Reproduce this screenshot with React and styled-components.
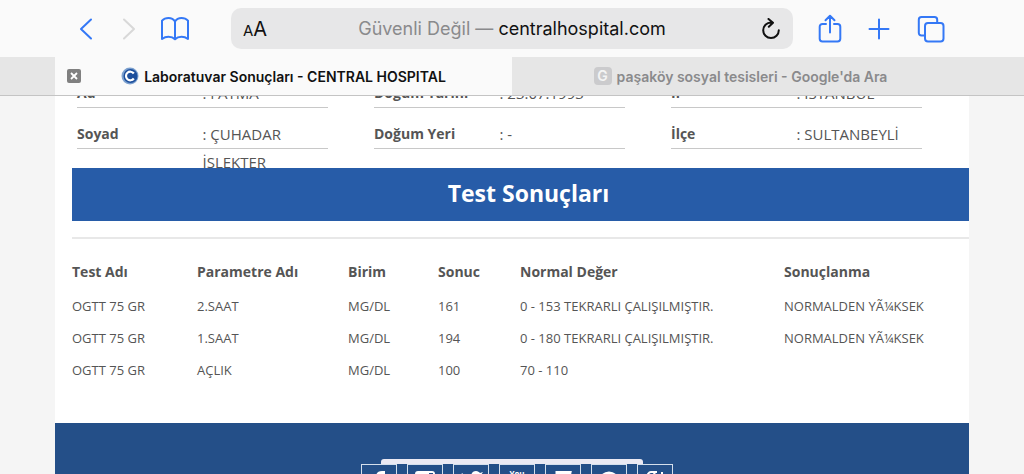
import styled, { createGlobalStyle } from 'styled-components'

const infoColumns = [
  [
    { id: 'ad', label: 'Ad', value: ': FATMA' },
    { id: 'soyad', label: 'Soyad', value: ': ÇUHADAR İSLEKTER' },
  ],
  [
    { id: 'dogumTarihi', label: 'Doğum Tarihi', value: ': 23.07.1993' },
    { id: 'dogumYeri', label: 'Doğum Yeri', value: ': -' },
  ],
  [
    { id: 'il', label: 'İl', value: ': İSTANBUL' },
    { id: 'ilce', label: 'İlçe', value: ': SULTANBEYLİ' },
  ],
]

const columns = [
  { title: 'Test Adı', width: '125px' },
  { title: 'Parametre Adı', width: '151px' },
  { title: 'Birim', width: '90px' },
  { title: 'Sonuc', width: '82px' },
  { title: 'Normal Değer', width: '264px' },
  { title: 'Sonuçlanma', width: 'auto' },
]

const results = [
  ['OGTT 75 GR', '2.SAAT', 'MG/DL', '161', '0 - 153 TEKRARLI ÇALIŞILMIŞTIR.', 'NORMALDEN YÃ¼KSEK'],
  ['OGTT 75 GR', '1.SAAT', 'MG/DL', '194', '0 - 180 TEKRARLI ÇALIŞILMIŞTIR.', 'NORMALDEN YÃ¼KSEK'],
  ['OGTT 75 GR', 'AÇLIK', 'MG/DL', '100', '70 - 110', ''],
]

const socials = [
  {
    name: 'Facebook',
    icon: <path d="M9 24V12H5V8h4V6c0-4 2-6 6-6h3v4h-3c-1 0-2 1-2 2v2h5l-1 4h-4v12z" fill="#fff" />,
  },
  {
    name: 'Instagram',
    icon: (
      <>
        <rect x="2" y="0" width="20" height="20" rx="3" fill="#fff" />
        <rect x="16" y="2" width="4" height="4" fill="#244f88" />
        <circle cx="12" cy="11" r="5" fill="#244f88" />
      </>
    ),
  },
  {
    name: 'Twitter',
    icon: (
      <path
        d="M3 2c3 3 6 4 9 4 0-4 2-6 5-6 2 0 3 1 4 2l3-1-2 3c0 10-6 16-13 16-3 0-6-1-8-2 3 0 5-1 7-2-2 0-4-2-4-4h2C4 11 2 9 2 7l2 1C2 6 2 4 3 2z"
        fill="#fff"
      />
    ),
  },
  {
    name: 'YouTube',
    icon: (
      <>
        <text x="12" y="6" textAnchor="middle" fontSize="8" fontWeight="700" fill="#fff">You</text>
        <rect x="2" y="9" width="20" height="14" rx="3" fill="#fff" />
      </>
    ),
  },
  {
    name: 'Foursquare',
    icon: <path d="M6 1.5h13l-3 15h-5l-5 6z" fill="none" stroke="#fff" strokeWidth="3" />,
  },
  {
    name: 'Pinterest',
    icon: <circle cx="12" cy="11" r="9" fill="none" stroke="#fff" strokeWidth="3" />,
  },
  {
    name: 'Google Plus',
    icon: (
      <>
        <path d="M14 1H8a4 4 0 1 0 1 8c4 0 4-6 1-8M8 12c-7 0-7 8 0 8s7-8 0-8z" fill="none" stroke="#fff" strokeWidth="2" />
        <path d="M19 1v8M15 5h8" stroke="#fff" strokeWidth="2" />
      </>
    ),
  },
]

const App = () => {
  return (
    <Window>
      <GlobalStyle />
      <Toolbar>
        <NavButtons>
          <IconButton aria-label="Geri">
            <svg width="14" height="22" viewBox="0 0 14 22">
              <path d="M12 1.5 2 11l10 9.5" />
            </svg>
          </IconButton>
          <IconButton aria-label="İleri" disabled>
            <svg width="14" height="22" viewBox="0 0 14 22">
              <path d="M2 1.5 12 11 2 20.5" />
            </svg>
          </IconButton>
          <IconButton aria-label="Yer İşaretleri" $wide>
            <svg width="28" height="24" viewBox="0 0 28 24">
              <path d="M14 4.500C12.500 2 10.500 1 7.500 1 4.500 1 2.500 2 1 3.600V22c2-1.500 4-2.200 6.500-2.200 2.700 0 4.800.7 6.500 2.400 1.700-1.700 3.800-2.400 6.500-2.400 2.500 0 4.500.7 6.500 2.200V3.600C25.500 2 23.500 1 20.500 1c-3 0-5 1-6.500 3.500zM14 4.500v17.500" />
            </svg>
          </IconButton>
        </NavButtons>
        <AddressBar>
          <TextSize aria-label="Sayfa ayarları">
            <small>A</small>A
          </TextSize>
          <Address>
            <span>Güvenli Değil — </span>centralhospital.com
          </Address>
          <Reload aria-label="Yeniden yükle">
            <svg width="20" height="22" viewBox="0 0 20 22">
              <path d="M10 4.500a7.800 7.800 0 1 0 7.800 7.800M7.500 1l4.500 3.800-4.200 3.900" />
            </svg>
          </Reload>
        </AddressBar>
        <ActionButtons>
          <IconButton aria-label="Paylaş">
            <svg width="24" height="30" viewBox="0 0 24 30">
              <path d="M8 10H4.500C2.800 10 1.700 11 1.700 12.700v12.100c0 1.700 1.100 2.700 2.800 2.700h15c1.700 0 2.800-1 2.800-2.700V12.700c0-1.700-1.100-2.700-2.800-2.700H16M12 18.500V2M7.500 6.200 12 1.700l4.500 4.500" />
            </svg>
          </IconButton>
          <IconButton aria-label="Yeni sekme">
            <svg width="22" height="22" viewBox="0 0 22 22">
              <path d="M11 1.500v19M1.500 11h19" />
            </svg>
          </IconButton>
          <IconButton aria-label="Sekmeler" $wide>
            <svg width="28" height="28" viewBox="0 0 28 28">
              <rect x="8" y="8" width="18.500" height="18.500" rx="3" />
              <path d="M8 20.500H4.500c-1.700 0-2.700-1-2.700-2.700V4.700C1.800 3 2.800 2 4.500 2h13c1.700 0 2.700 1 2.700 2.700V8" />
            </svg>
          </IconButton>
        </ActionButtons>
      </Toolbar>

      <TabStrip>
        <Tab $active>
          <CloseTab aria-label="Sekmeyi kapat">
            <svg width="8" height="8" viewBox="0 0 8 8">
              <path d="M1 1l6 6M7 1 1 7" stroke="#fff" strokeWidth="1.8" />
            </svg>
          </CloseTab>
          <TabTitle>
            <svg width="18" height="18" viewBox="0 0 18 18">
              <circle cx="9" cy="9" r="8.5" fill="#7ba0cf" />
              <circle cx="9.5" cy="9" r="7" fill="#1d4f9c" />
              <path d="M12.800 6.500A4.300 4.300 0 1 0 12.800 11.500" fill="none" stroke="#fff" strokeWidth="2.2" />
            </svg>
            Laboratuvar Sonuçları - CENTRAL HOSPITAL
          </TabTitle>
        </Tab>
        <Tab>
          <TabTitle>
            <LetterIcon>G</LetterIcon>
            paşaköy sosyal tesisleri - Google'da Ara
          </TabTitle>
        </Tab>
      </TabStrip>

      <Viewport>
        <Page>
          <PatientInfo>
            {infoColumns.map((rows) => (
              <InfoColumn key={rows[0].id}>
                {rows.map((row) => (
                  <InfoRow key={row.id}>
                    <dt>{row.label}</dt>
                    <dd>{row.value}</dd>
                  </InfoRow>
                ))}
              </InfoColumn>
            ))}
          </PatientInfo>

          <Results>
            <Banner>Test Sonuçları</Banner>
            <Divider />
            <ResultTable>
              <colgroup>
                {columns.map((col) => (
                  <Col key={col.title} $width={col.width} />
                ))}
              </colgroup>
              <thead>
                <tr>
                  {columns.map((col) => (
                    <th key={col.title} scope="col">{col.title}</th>
                  ))}
                </tr>
              </thead>
              <tbody>
                {results.map((row) => (
                  <tr key={row[1]}>
                    {row.map((cell, i) => (
                      <td key={columns[i].title}>{cell}</td>
                    ))}
                  </tr>
                ))}
              </tbody>
            </ResultTable>
          </Results>

          <Footer>
            <FooterBar />
            <SocialList>
              {socials.map((social) => (
                <li key={social.name}>
                  <SocialLink href="#" aria-label={social.name}>
                    <svg width="24" height="24" viewBox="0 0 24 24">{social.icon}</svg>
                  </SocialLink>
                </li>
              ))}
            </SocialList>
          </Footer>
        </Page>
      </Viewport>
    </Window>
  )
}

export default App

const GlobalStyle = createGlobalStyle`
  * {
    box-sizing: border-box;
  }
  body {
    margin: 0;
    font-family: 'Open Sans', 'Noto Sans', sans-serif;
    color: #555;
  }
  button {
    padding: 0;
    border: none;
    background: none;
    font: inherit;
    color: inherit;
  }
`

const Window = styled.div`
  display: flex;
  flex-direction: column;
  height: 100vh;
  overflow: hidden;
`

const Toolbar = styled.header`
  display: flex;
  align-items: center;
  flex: none;
  height: 57px;
  background-color: #fafafa;
  font-family: Inter, 'Liberation Sans', sans-serif;
`

const NavButtons = styled.nav`
  display: flex;
  gap: 13px;
  width: 231px;
  padding-left: 71px;
`

const ActionButtons = styled.div`
  display: flex;
  justify-content: flex-end;
  gap: 19px;
  width: 231px;
  padding-right: 75px;
`

const IconButton = styled.button`
  display: flex;
  align-items: center;
  justify-content: center;
  width: ${({ $wide }) => ($wide ? '36px' : '30px')};
  height: 36px;
  svg {
    fill: none;
    stroke: #3478f6;
    stroke-width: 2;
    stroke-linecap: round;
    stroke-linejoin: round;
  }
  &:disabled svg {
    stroke: #d8d8d8;
  }
`

const AddressBar = styled.div`
  display: flex;
  align-items: center;
  flex: 1;
  height: 41px;
  padding: 0 12px;
  border-radius: 10px;
  background-color: #e7e7e8;
  color: #111;
`

const TextSize = styled.button`
  width: 24px;
  font-size: 20px;
  white-space: nowrap;
  small {
    font-size: 15px;
  }
`

const Address = styled.button`
  flex: 1;
  font-size: 18px;
  white-space: nowrap;
  span {
    color: #8a8a8c;
  }
`

const Reload = styled.button`
  display: flex;
  justify-content: flex-end;
  width: 24px;
  svg {
    fill: none;
    stroke: #111;
    stroke-width: 2;
    stroke-linecap: round;
    stroke-linejoin: round;
  }
`

const TabStrip = styled.div`
  display: flex;
  flex: none;
  height: 39px;
  padding: 0 55px;
  border-bottom: 1px solid #c4c4c4;
  background-color: #e6e6e6;
  font-family: Inter, 'Liberation Sans', sans-serif;
`

const Tab = styled.div`
  display: flex;
  align-items: center;
  flex: 0 0 50%;
  padding: ${({ $active }) => ($active ? '0 26px 0 12px' : '0 12px')};
  background-color: ${({ $active }) => ($active ? '#fafafa' : '#e6e6e6')};
  color: ${({ $active }) => ($active ? '#111' : '#8a8a8c')};
`

const CloseTab = styled.button`
  display: flex;
  align-items: center;
  justify-content: center;
  flex: none;
  width: 14px;
  height: 14px;
  border-radius: 2px;
  background-color: #808080;
`

const TabTitle = styled.div`
  display: flex;
  align-items: center;
  justify-content: center;
  flex: 1;
  gap: 5px;
  font-size: 14px;
  font-weight: 600;
  white-space: nowrap;
`

const LetterIcon = styled.span`
  width: 18px;
  border-radius: 4px;
  background-color: #cbcbcd;
  color: #f4f4f4;
  line-height: 18px;
  text-align: center;
`

const Viewport = styled.main`
  flex: 1;
  min-height: 0;
  overflow: hidden;
  background-color: #f5f5f5;
`

const Page = styled.div`
  margin: 0 55px;
  background-color: #fff;
`

/* only the tail of the patient block is in view, the rest is scrolled under the tabs */
const PatientInfo = styled.div`
  display: grid;
  grid-template-columns: repeat(3, 1fr);
  align-content: end;
  gap: 46px;
  height: 72px;
  padding: 0 47px 19px 22px;
  overflow: hidden;
`

const InfoColumn = styled.dl`
  margin: 0;
`

const InfoRow = styled.div`
  display: grid;
  grid-template-columns: 1fr 1fr;
  height: 41px;
  padding-top: 12px;
  border-bottom: 1px solid #c8c8c8;
  line-height: 28px;
  dt {
    font-size: 14px;
    font-weight: 700;
  }
  dd {
    margin: 0;
    font-size: 15px;
  }
`

const Results = styled.section`
  padding: 0 0 37px 17px;
`

const Banner = styled.h2`
  margin: 0;
  padding: 0 0 2px 16px;
  background-color: #275ca8;
  color: #fff;
  font-size: 23px;
  font-weight: 700;
  line-height: 51px;
  text-align: center;
`

const Divider = styled.hr`
  margin: 16px 0 13px;
  border: none;
  border-top: 2px solid #e8e8e8;
`

const ResultTable = styled.table`
  width: 100%;
  border-collapse: collapse;
  table-layout: fixed;
  font-size: 13px;
  white-space: nowrap;
  th,
  td {
    height: 32px;
    padding: 0;
    text-align: left;
  }
  th {
    height: 38px;
    font-size: 14px;
    font-weight: 700;
  }
`

const Col = styled.col`
  width: ${({ $width }) => $width};
`

const Footer = styled.footer`
  display: flex;
  flex-direction: column;
  align-items: center;
  padding: 36px 0;
  background-color: #244f88;
`

const FooterBar = styled.div`
  width: 262px;
  height: 5px;
  border-radius: 3px 3px 0 0;
  background-color: #ebe9f3;
`

const SocialList = styled.ul`
  display: flex;
  margin: 0;
  padding: 0;
  list-style: none;
  li {
    margin-left: 10px;
  }
`

const SocialLink = styled.a`
  display: flex;
  justify-content: center;
  width: 36px;
  height: 36px;
  padding-top: 6px;
  border: 1px solid #d5dfec;
`
